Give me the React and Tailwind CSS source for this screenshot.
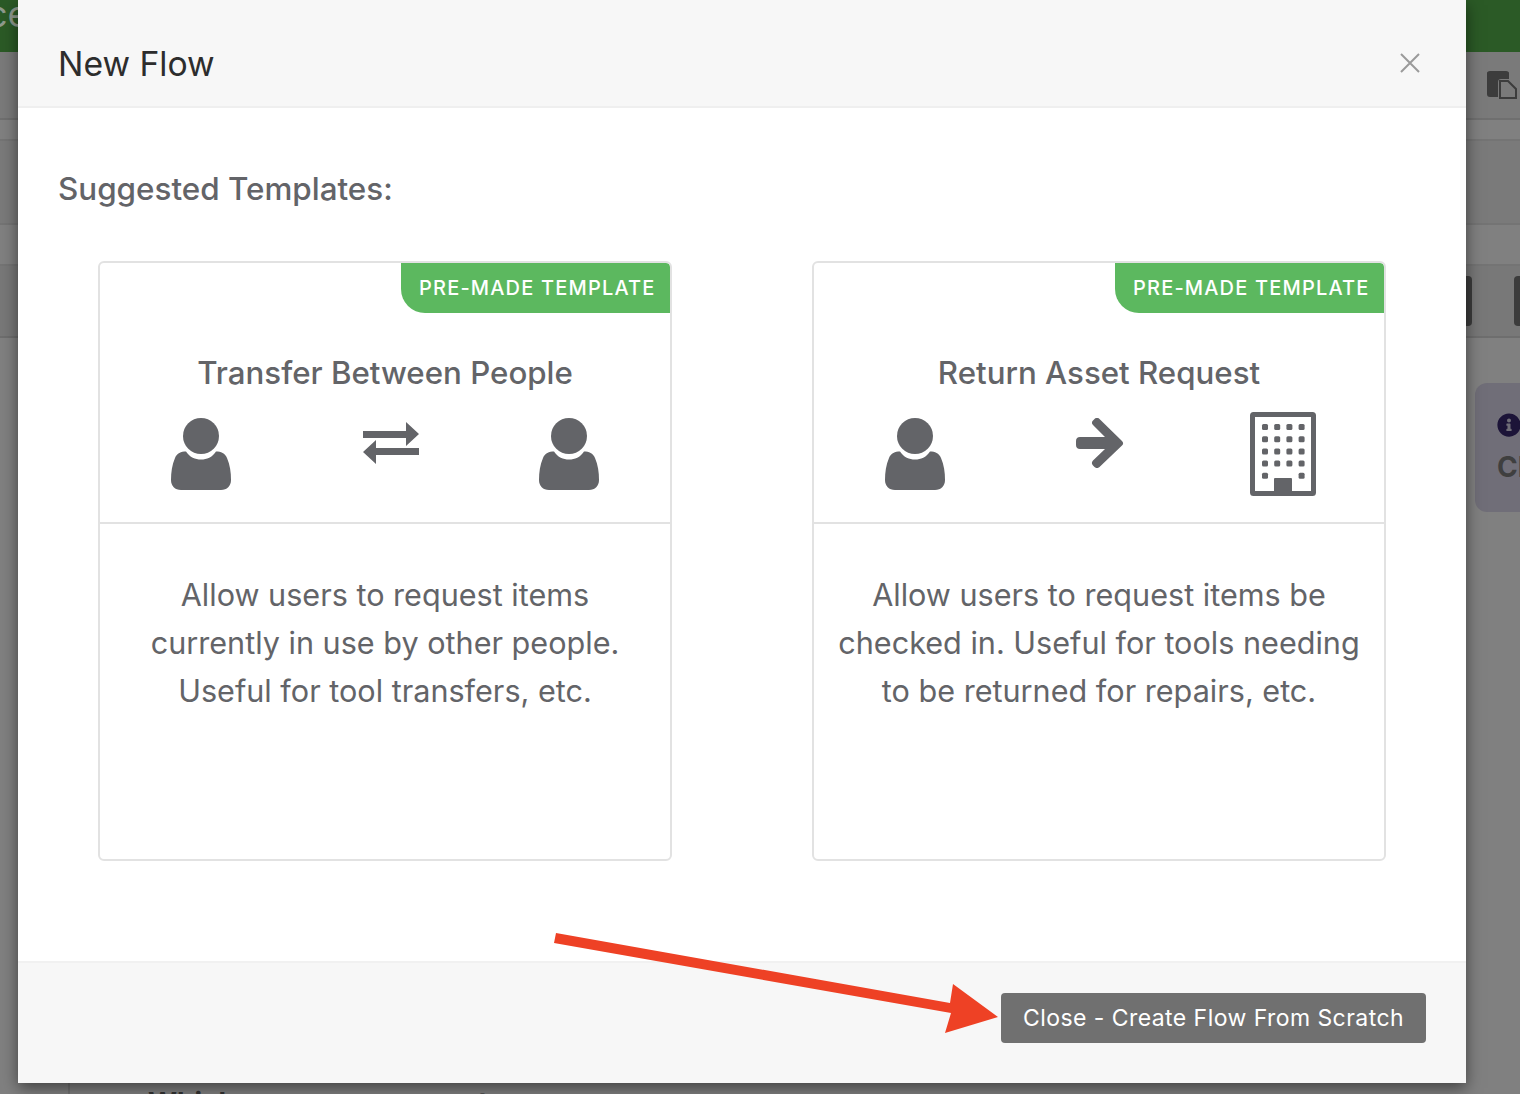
import React from "react";
import { FaInfoCircle } from "react-icons/fa";

function PersonIcon() {
  return (
    <svg width="60" height="72" viewBox="0 0 60 72" fill="#636468">
      <circle cx="30" cy="18" r="18" />
      <path d="M15 33.500C19 39.500 24 41.500 30 41.500C36 41.500 41 39.500 45 33.500C50 33.500 54 35 56 40C59 47 60 54 60 62C60 68 56 72 50 72H10C4 72 0 68 0 62C0 54 1 47 4 40C6 35 10 33.500 15 33.500Z" />
    </svg>
  );
}

function SwapIcon() {
  return (
    <svg width="58" height="42" viewBox="0 0 58 42" fill="#636468">
      <path d="M1 9H44V0L57 12L44 24V16H1Z" />
      <path d="M57 26H14V18L1 30L14 42V33H57Z" />
    </svg>
  );
}

function ArrowIcon() {
  return (
    <svg width="48" height="50" viewBox="0 0 48 50" fill="#636468">
      <path d="M4 19H29L17.500 7.500C15.500 5.500 15.500 4 17 2.500L18.500 1C20 -0.500 22 -0.500 23.500 1L46 23C47.500 24.500 47.500 26 46 27.500L23.500 49C22 50.500 20 50.500 18.500 49L17 47.500C15.500 46 15.500 44 17 42.500L29 31H4C1.500 31 0 29.500 0 27V23C0 20.500 1.500 19 4 19Z" />
    </svg>
  );
}

function BuildingIcon() {
  const rows = [0, 1, 2, 3, 4];
  const cols = [0, 1, 2, 3];
  return (
    <svg width="66" height="84" viewBox="0 0 66 84" fill="#636468">
      <rect x="2.500" y="2.500" width="61" height="79" rx="1" fill="none" stroke="#636468" strokeWidth="5" />
      {rows.map((r) =>
        cols.map((c) =>
          r === 4 && (c === 1 || c === 2) ? null : (
            <rect key={r + "-" + c} x={12 + c * 12.200} y={12 + r * 12.200} width="6" height="6" rx="1.500" />
          )
        )
      )}
      <rect x="24" y="66" width="18" height="16" rx="1" />
    </svg>
  );
}

function TemplateCard({ title, lines, from, middle, to }) {
  return (
    <div className="relative h-[600px] overflow-hidden rounded-md border-2 border-[#e2e2e2] bg-white">
      {/* Badge */}
      <div className="absolute right-0 top-0 flex h-[50px] w-[269px] items-center rounded-bl-[24px] rounded-tr bg-[#5cb85f] pl-[18px] text-[20px] font-medium tracking-[1.180px] text-white">
        PRE-MADE TEMPLATE
      </div>
      <div className="h-[261px] border-b-2 border-[#e2e2e2] pt-[88px]">
        <h3 className="text-center text-[31.250px] leading-[44px] font-medium text-[#636468]">{title}</h3>
        <div className="mt-[23px] grid h-[72px] grid-cols-3 px-[71px]">
          <div>{from}</div>
          {middle}
          <div className="flex justify-end">{to}</div>
        </div>
      </div>
      <div className="px-[20px] pt-[47px] text-center text-[30.600px] leading-[48px] text-[#636468]">
        {lines.map((l) => (
          <p key={l}>{l}</p>
        ))}
      </div>
    </div>
  );
}

export default function App() {
  return (
    <div className="relative h-[1094px] w-[1520px] overflow-hidden bg-[#808080] font-['Inter','Liberation_Sans',sans-serif]">
      {/* Page behind the dialog */}
      <div className="flex h-[52px] items-start overflow-hidden bg-[#2b5a26]">
        <span className="ml-[-13px] text-[36px] leading-[28px] text-[#8f9a8d]">ce</span>
      </div>
      <div className="flex h-[68px] justify-end border-b-2 border-[#6f6f6f] bg-[#7a7a7a] pr-[3px] pt-[18px]">
        <svg width="30" height="29" viewBox="0 0 30 29" fill="#3c3c3c">
          <path d="M3 1H19C21 1 22 2 22 3V9H14C12 9 11 10 11 12V27H3C1 27 0 26 0 24V3C0 2 1 1 3 1Z" />
          <path d="M13 11H21L29 19V28H13Z" fill="#7a7a7a" stroke="#3c3c3c" strokeWidth="2" />
        </svg>
      </div>
      <div className="h-[21px] border-b-2 border-[#747474] bg-[#808080]" />
      <div className="h-[84px] border-b-2 border-[#747474] bg-[#7a7a7a]" />
      <div className="h-[41px] border-b-2 border-[#747474] bg-[#808080]" />
      <div className="flex h-[72px] items-center justify-end gap-[42px] border-b-2 border-[#6e6e6e] bg-[#787878]">
        <div className="h-[50px] w-[8px] rounded-r bg-[#3c3c3c]" />
        <div className="h-[50px] w-[6px] rounded-l bg-[#3c3c3c]" />
      </div>
      <div className="ml-auto mt-[45px] h-[129px] w-[45px] overflow-hidden rounded-l-xl bg-[#706e78] pl-[22px] pt-[30px]">
        <FaInfoCircle size={24} color="#1c1438" />
        <div className="mt-[14px] text-[28px] leading-[32px] font-bold text-[#3f3f3f]">Cl</div>
      </div>
      <div className="ml-[68px] mt-[571px] h-[40px] border-l-2 border-[#727272] pl-[78px] pt-[4px] text-[28px] leading-[32px] font-bold whitespace-nowrap text-[#333333]">
        Which users can request
      </div>

      {/* Dialog */}
      <div className="absolute left-[18px] top-0 flex h-[1083px] w-[1448px] flex-col bg-white shadow-[0_5px_15px_rgba(0,0,0,0.5)]">
        <div className="flex h-[108px] items-center justify-between border-b-2 border-[#efefef] bg-[#f7f7f7] pl-[40px] pr-[45px] pt-[22px]">
          <h1 className="text-[33.700px] leading-[44px] text-[#2d2d2d]">New Flow</h1>
          <svg width="22" height="22" viewBox="0 0 22 22" stroke="#9a9a9a" strokeWidth="2" className="mb-[2px]">
            <path d="M2 2L20 20M20 2L2 20" />
          </svg>
        </div>
        <div className="flex-1 px-[40px] pt-[60px]">
          <h2 className="text-[31.400px] leading-[42px] font-medium text-[#636468]">Suggested Templates:</h2>
          <div className="mt-[51px] grid grid-cols-2 gap-[140px] px-[40px]">
            <TemplateCard
              title="Transfer Between People"
              lines={["Allow users to request items", "currently in use by other people.", "Useful for tool transfers, etc."]}
              from={<PersonIcon />}
              middle={
                <div className="flex justify-center pl-[12px] pt-[4px]">
                  <SwapIcon />
                </div>
              }
              to={<PersonIcon />}
            />
            <TemplateCard
              title="Return Asset Request"
              lines={["Allow users to request items be", "checked in. Useful for tools needing", "to be returned for repairs, etc."]}
              from={<PersonIcon />}
              middle={
                <div className="flex justify-center pl-[2px]">
                  <ArrowIcon />
                </div>
              }
              to={
                <div className="mr-[-3px] mt-[-6px] h-[72px]">
                  <BuildingIcon />
                </div>
              }
            />
          </div>
        </div>
        <div className="flex h-[122px] items-start justify-end border-t-2 border-[#f1f1f1] bg-[#f7f7f7] pr-[40px] pt-[30px]">
          <button className="h-[50px] w-[425px] rounded bg-[#707070] text-[23px] tracking-[0.440px] text-white">
            Close - Create Flow From Scratch
          </button>
        </div>
      </div>

      {/* Annotation arrow */}
      <svg className="absolute left-[540px] top-[920px]" width="470" height="125" viewBox="0 0 470 125" fill="#ee4125">
        <path d="M16 13L14 23L411 93L405 113L458 97L413 64L410 83Z" />
      </svg>
    </div>
  );
}
